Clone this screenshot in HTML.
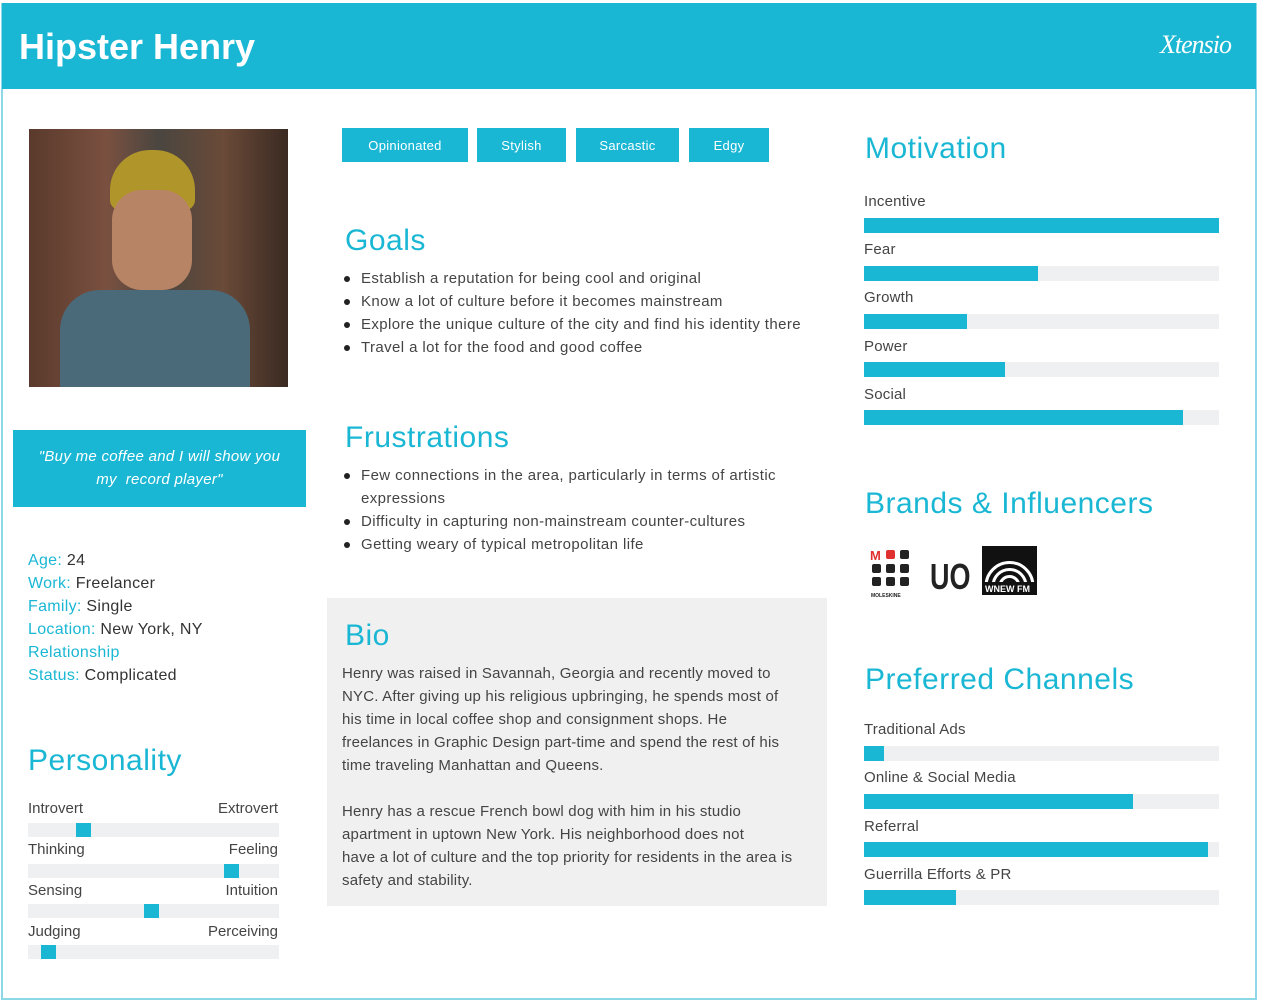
<!DOCTYPE html>
<html><head><meta charset="utf-8"><style>
*{margin:0;padding:0;box-sizing:border-box}
body{width:1261px;height:1002px;background:#fff;font-family:"Liberation Sans",sans-serif;color:#444;position:relative;overflow:hidden}
.a{position:absolute}
.c{color:#1ab7d4}
.h{font-size:30px;color:#1ab7d4;font-weight:normal;letter-spacing:0.5px}
.t{font-size:15px;color:#444;letter-spacing:0.2px}
.bar{position:absolute;height:15px;background:#eef0f2}
.bar i{position:absolute;left:0;top:0;bottom:0;background:#1ab7d4}
.tag{position:absolute;top:128px;height:34px;background:#1ab7d4;color:#fff;font-size:13px;text-align:center;line-height:36px;letter-spacing:0.3px}
ul{list-style:none}
li{position:relative;padding-left:19px;font-size:15px;line-height:23px;color:#444;letter-spacing:0.4px;white-space:nowrap}
li:before{content:"";position:absolute;left:2px;top:9px;width:6px;height:6px;border-radius:50%;background:#222}
.trk{position:absolute;left:28px;width:251px;height:14px;background:#eef0f2}
.trk i{position:absolute;top:0;width:15px;height:14px;background:#1ab7d4}
.pl{position:absolute;font-size:15px;color:#444}
</style></head><body>
<div class="a" style="left:1px;top:3px;width:1256px;height:997px;border:2px solid #8dd8e6"></div>
<div class="a" style="left:2px;top:3px;width:1254px;height:86px;background:#1ab7d4"></div>
<div class="a" style="left:19px;top:26px;font-size:36px;font-weight:bold;color:#fff">Hipster Henry</div>
<div class="a" style="left:1160px;top:30px;font-size:26px;color:#fff;font-family:'Liberation Serif',serif;font-style:italic;letter-spacing:-1px">Xtensio</div>

<div class="a" style="left:29px;top:129px;width:259px;height:258px;background:linear-gradient(90deg,#5a3a2c 0%,#7a5040 30%,#4a4640 50%,#6a4a38 75%,#3a2a22 100%)"></div>
<div class="a" style="left:110px;top:150px;width:85px;height:60px;border-radius:40px 40px 10px 10px;background:#b0962a"></div>
<div class="a" style="left:112px;top:190px;width:80px;height:100px;border-radius:30px;background:#b88466"></div>
<div class="a" style="left:60px;top:290px;width:190px;height:97px;border-radius:40px 40px 0 0;background:#4a6a7a"></div>

<div class="a" style="left:13px;top:430px;width:293px;height:77px;background:#1ab7d4;color:#fff;font-style:italic;font-size:15px;text-align:center;line-height:23px;padding-top:15px;letter-spacing:0.3px">"Buy me coffee and I will show you<br>my&nbsp; record player"</div>

<div class="a" style="left:28px;top:549px;font-size:16px;line-height:23px;color:#333;letter-spacing:0.3px">
<div><span class="c">Age:</span> 24</div>
<div><span class="c">Work:</span> Freelancer</div>
<div><span class="c">Family:</span> Single</div>
<div><span class="c">Location:</span> New York, NY</div>
<div><span class="c">Relationship</span></div>
<div><span class="c">Status:</span> Complicated</div>
</div>

<div class="a h" style="left:28px;top:744px">Personality</div>
<div class="pl" style="left:28px;top:800px">Introvert</div><div class="pl" style="right:983px;top:800px">Extrovert</div>
<div class="trk" style="top:823px"><i style="left:48px"></i></div>
<div class="pl" style="left:28px;top:841px">Thinking</div><div class="pl" style="right:983px;top:841px">Feeling</div>
<div class="trk" style="top:864px"><i style="left:196px"></i></div>
<div class="pl" style="left:28px;top:882px">Sensing</div><div class="pl" style="right:983px;top:882px">Intuition</div>
<div class="trk" style="top:904px"><i style="left:116px"></i></div>
<div class="pl" style="left:28px;top:923px">Judging</div><div class="pl" style="right:983px;top:923px">Perceiving</div>
<div class="trk" style="top:945px"><i style="left:13px"></i></div>

<div class="tag" style="left:342px;width:126px">Opinionated</div>
<div class="tag" style="left:477px;width:89px">Stylish</div>
<div class="tag" style="left:576px;width:103px">Sarcastic</div>
<div class="tag" style="left:689px;width:80px">Edgy</div>

<div class="a h" style="left:345px;top:224px">Goals</div>
<ul class="a" style="left:342px;top:267px;width:480px">
<li>Establish a reputation for being cool and original</li>
<li>Know a lot of culture before it becomes mainstream</li>
<li>Explore the unique culture of the city and find his identity there</li>
<li>Travel a lot for the food and good coffee</li>
</ul>
<div class="a h" style="left:345px;top:421px">Frustrations</div>
<ul class="a" style="left:342px;top:464px;width:460px">
<li>Few connections in the area, particularly in terms of artistic<br>expressions</li>
<li>Difficulty in capturing non-mainstream counter-cultures</li>
<li>Getting weary of typical metropolitan life</li>
</ul>

<div class="a" style="left:327px;top:598px;width:500px;height:308px;background:#f0f0f0"></div>
<div class="a h" style="left:345px;top:619px">Bio</div>
<div class="a" style="left:342px;top:662px;width:478px;font-size:15px;line-height:23px;color:#444;white-space:nowrap;letter-spacing:0.2px">Henry was raised in Savannah, Georgia and recently moved to<br>NYC. After giving up his religious upbringing, he spends most of<br>his time in local coffee shop and consignment shops. He<br>freelances in Graphic Design part-time and spend the rest of his<br>time traveling Manhattan and Queens.<br><br>Henry has a rescue French bowl dog with him in his studio<br>apartment in uptown New York. His neighborhood does not<br>have a lot of culture and the top priority for residents in the area is<br>safety and stability.</div>

<div class="a h" style="left:865px;top:132px">Motivation</div>
<div class="a t" style="left:864px;top:193px">Incentive</div><div class="bar" style="left:864px;top:218px;width:355px"><i style="width:355px"></i></div>
<div class="a t" style="left:864px;top:241px">Fear</div><div class="bar" style="left:864px;top:266px;width:355px"><i style="width:174px"></i></div>
<div class="a t" style="left:864px;top:289px">Growth</div><div class="bar" style="left:864px;top:314px;width:355px"><i style="width:103px"></i></div>
<div class="a t" style="left:864px;top:338px">Power</div><div class="bar" style="left:864px;top:362px;width:355px"><i style="width:141px"></i></div>
<div class="a t" style="left:864px;top:386px">Social</div><div class="bar" style="left:864px;top:410px;width:355px"><i style="width:319px"></i></div>

<div class="a h" style="left:865px;top:487px">Brands &amp; Influencers</div>
<svg class="a" style="left:868px;top:546px" width="172" height="54">
<text x="2" y="14" font-size="13" font-weight="bold" fill="#e03030" font-family="Liberation Sans">M</text>
<rect x="18" y="4" width="9" height="9" rx="2" fill="#e03030"/><rect x="32" y="4" width="9" height="9" rx="2" fill="#222"/>
<rect x="4" y="18" width="9" height="9" rx="2" fill="#222"/><rect x="18" y="18" width="9" height="9" rx="2" fill="#222"/><rect x="32" y="18" width="9" height="9" rx="2" fill="#222"/>
<rect x="4" y="31" width="9" height="9" rx="2" fill="#222"/><rect x="18" y="31" width="9" height="9" rx="2" fill="#222"/><rect x="32" y="31" width="9" height="9" rx="2" fill="#222"/>
<text x="3" y="51" font-size="5" font-weight="bold" fill="#222" font-family="Liberation Sans">MOLESKINE</text>
<text x="62" y="43" font-size="36" font-weight="bold" fill="#222" font-family="Liberation Sans" transform="scale(0.75 1)" style="transform-origin:62px 0">UO</text>
<rect x="114" y="0" width="55" height="49" fill="#111"/>
<path d="M118 40 A23 23 0 0 1 165 40" stroke="#fff" stroke-width="3" fill="none"/>
<path d="M125 40 A16 16 0 0 1 158 40" stroke="#fff" stroke-width="3" fill="none"/>
<path d="M132 40 A9 9 0 0 1 151 40" stroke="#fff" stroke-width="3" fill="none"/>
<rect x="114" y="36" width="55" height="13" fill="#111"/>
<text x="117" y="46" font-size="9" font-weight="bold" fill="#fff" font-family="Liberation Sans">WNEW FM</text>
</svg>

<div class="a h" style="left:865px;top:663px">Preferred Channels</div>
<div class="a t" style="left:864px;top:721px">Traditional Ads</div><div class="bar" style="left:864px;top:746px;width:355px"><i style="width:20px"></i></div>
<div class="a t" style="left:864px;top:769px">Online &amp; Social Media</div><div class="bar" style="left:864px;top:794px;width:355px"><i style="width:269px"></i></div>
<div class="a t" style="left:864px;top:818px">Referral</div><div class="bar" style="left:864px;top:842px;width:355px"><i style="width:344px"></i></div>
<div class="a t" style="left:864px;top:866px">Guerrilla Efforts &amp; PR</div><div class="bar" style="left:864px;top:890px;width:355px"><i style="width:92px"></i></div>
</body></html>
